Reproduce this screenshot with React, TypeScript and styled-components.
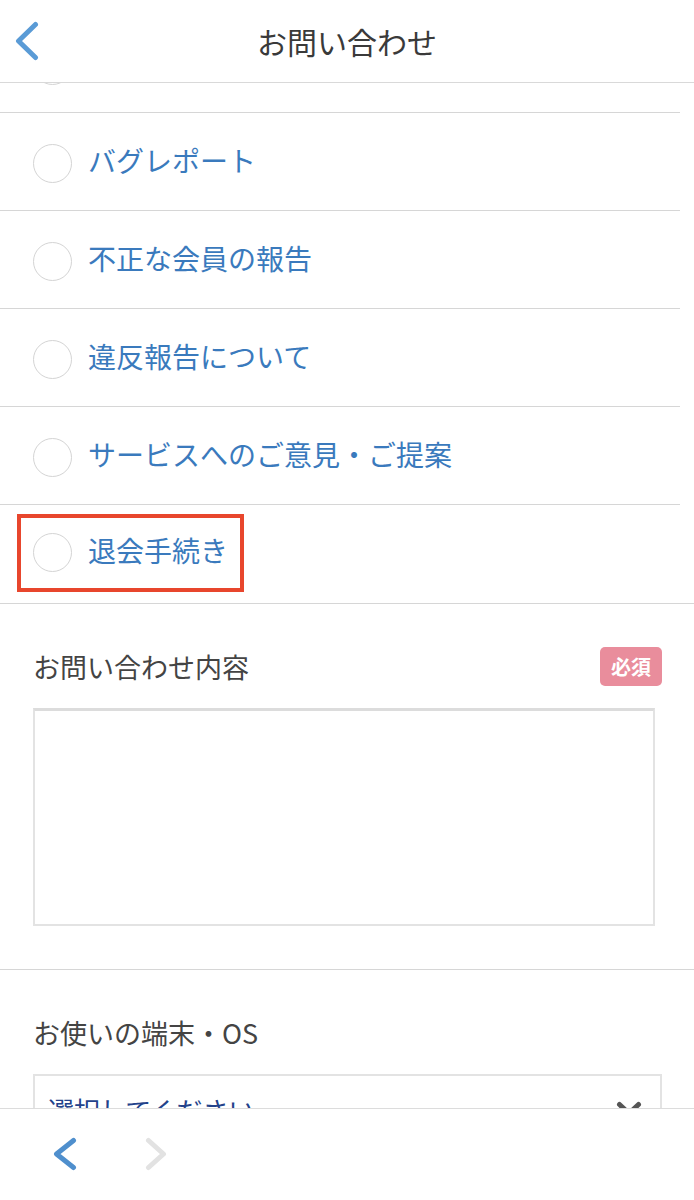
import React, { useLayoutEffect, useRef } from "react";
import styled, { createGlobalStyle } from "styled-components";

const GlobalStyle = createGlobalStyle`
  html, body { margin: 0; padding: 0; background: #fff; }
  body {
    font-family: "Noto Sans CJK JP", "Noto Sans", sans-serif;
    -webkit-font-smoothing: antialiased;
  }
  * { box-sizing: border-box; }
`;

const Page = styled.div`
  height: 100vh;
  display: flex;
  flex-direction: column;
  background: #fff;
  overflow: hidden;
`;

const Header = styled.header`
  height: 83px;
  flex: none;
  display: grid;
  grid-template-columns: 80px 1fr 80px;
  align-items: center;
  border-bottom: 1px solid #d9d9d9;
`;

const IconButton = styled.button`
  border: 0;
  background: none;
  padding: 0;
  display: flex;
  align-items: center;
  justify-content: center;
  cursor: pointer;
`;

const HeaderBack = styled(IconButton)`
  justify-self: start;
  margin-left: 15px;
`;

const Title = styled.h1`
  margin: 0;
  text-align: center;
  font-size: 30px;
  font-weight: 400;
  color: #3a3a3a;
  letter-spacing: 0;
`;

const Scroll = styled.main`
  flex: 1;
  overflow: hidden;
`;

const OptionList = styled.ul`
  list-style: none;
  margin: 0;
  padding: 0;
`;

const OptionRow = styled.li<{ $last?: boolean; $highlight?: boolean }>`
  height: ${(p) => (p.$last ? "99px" : "98px")};
  display: flex;
  align-items: center;
  padding-top: 3px;
  padding-left: ${(p) => (p.$highlight ? "17px" : "33px")};
  margin-right: ${(p) => (p.$last ? "0" : "14px")};
  border-bottom: 1px solid #d6d6d6;
`;

const OptionInner = styled.label<{ $highlight?: boolean }>`
  display: flex;
  align-items: center;
  gap: 16px;
  ${(p) =>
    p.$highlight
      ? `
    border: 4px solid #e8462d;
    padding: 15px 12px 16px 12px;
    margin-top: -5px;
  `
      : ""}
`;

const Radio = styled.span`
  width: 39px;
  height: 39px;
  border-radius: 50%;
  border: 1.5px solid #d4d4d4;
  background: #fff;
  flex: none;
`;

const OptionText = styled.span`
  font-size: 28px;
  color: #3a7abd;
  line-height: 1.2;
  margin-top: -4px;
`;

const Section = styled.section<{ $bordered?: boolean }>`
  padding: 43px 32px 43px 33px;
  border-bottom: ${(p) => (p.$bordered ? "1.5px solid #d6d6d6" : "0")};
`;

const FieldHead = styled.div`
  display: flex;
  align-items: center;
  justify-content: space-between;
  min-height: 39px;
  margin-bottom: 22px;
`;

const FieldLabel = styled.span`
  font-size: 27px;
  color: #444;
`;

const Badge = styled.span`
  width: 62px;
  height: 39px;
  border-radius: 5px;
  background: #e98d9c;
  color: #fff;
  font-size: 20px;
  font-weight: 700;
  display: flex;
  align-items: center;
  justify-content: center;
`;

const TextArea = styled.div`
  height: 218px;
  margin-right: 7px;
  border: 2px solid #e3e3e3;
  border-top: 3px solid #dcdcdc;
  background: #fff;
`;

const Select = styled.div`
  height: 66px;
  border: 2px solid #e3e3e3;
  display: flex;
  align-items: center;
  justify-content: space-between;
  padding: 4px 18px 0 13px;
`;

const SelectText = styled.span`
  font-size: 26px;
  color: #23428a;
`;

const Footer = styled.footer`
  height: 92px;
  flex: none;
  border-top: 1.5px solid #dcdcdc;
  display: flex;
  align-items: center;
  gap: 68px;
  padding-left: 53px;
  padding-bottom: 2px;
  background: #fff;
`;

const Chevron = ({ dir, color, w, h, sw }: { dir: "left" | "right" | "down"; color: string; w: number; h: number; sw: number }) => {
  const p = sw / 2 + 1;
  let d = "";
  if (dir === "left") d = `M${w - p} ${p} L${p} ${h / 2} L${w - p} ${h - p}`;
  if (dir === "right") d = `M${p} ${p} L${w - p} ${h / 2} L${p} ${h - p}`;
  if (dir === "down") d = `M${p} ${p} L${w / 2} ${h - p} L${w - p} ${p}`;
  return (
    <svg width={w} height={h} viewBox={`0 0 ${w} ${h}`} fill="none">
      <path d={d} stroke={color} strokeWidth={sw} strokeLinecap="round" strokeLinejoin="round" />
    </svg>
  );
};

const options = [
  "",
  "バグレポート",
  "不正な会員の報告",
  "違反報告について",
  "サービスへのご意見・ご提案",
  "退会手続き",
];

export default function App() {
  const scrollRef = useRef<HTMLElement>(null);
  useLayoutEffect(() => {
    if (scrollRef.current) scrollRef.current.scrollTop = 68;
  }, []);

  return (
    <>
      <GlobalStyle />
      <Page>
        <Header>
          <HeaderBack aria-label="戻る">
            <Chevron dir="left" color="#5a9bd6" w={24} h={40} sw={5} />
          </HeaderBack>
          <Title>お問い合わせ</Title>
          <span />
        </Header>
        <Scroll ref={scrollRef}>
          <OptionList>
            {options.map((o, i) => {
              const last = i === options.length - 1;
              return (
                <OptionRow key={i} $last={last} $highlight={last}>
                  <OptionInner $highlight={last}>
                    <Radio />
                    <OptionText>{o}</OptionText>
                  </OptionInner>
                </OptionRow>
              );
            })}
          </OptionList>
          <Section $bordered>
            <FieldHead>
              <FieldLabel>お問い合わせ内容</FieldLabel>
              <Badge>必須</Badge>
            </FieldHead>
            <TextArea />
          </Section>
          <Section>
            <FieldHead>
              <FieldLabel>お使いの端末・OS</FieldLabel>
            </FieldHead>
            <Select>
              <SelectText>選択してください</SelectText>
              <Chevron dir="down" color="#555" w={26} h={16} sw={5} />
            </Select>
          </Section>
        </Scroll>
        <Footer>
          <IconButton aria-label="戻る">
            <Chevron dir="left" color="#4f8fcd" w={24} h={34} sw={5} />
          </IconButton>
          <IconButton aria-label="進む">
            <Chevron dir="right" color="#e2e2e2" w={22} h={34} sw={5} />
          </IconButton>
        </Footer>
      </Page>
    </>
  );
}
